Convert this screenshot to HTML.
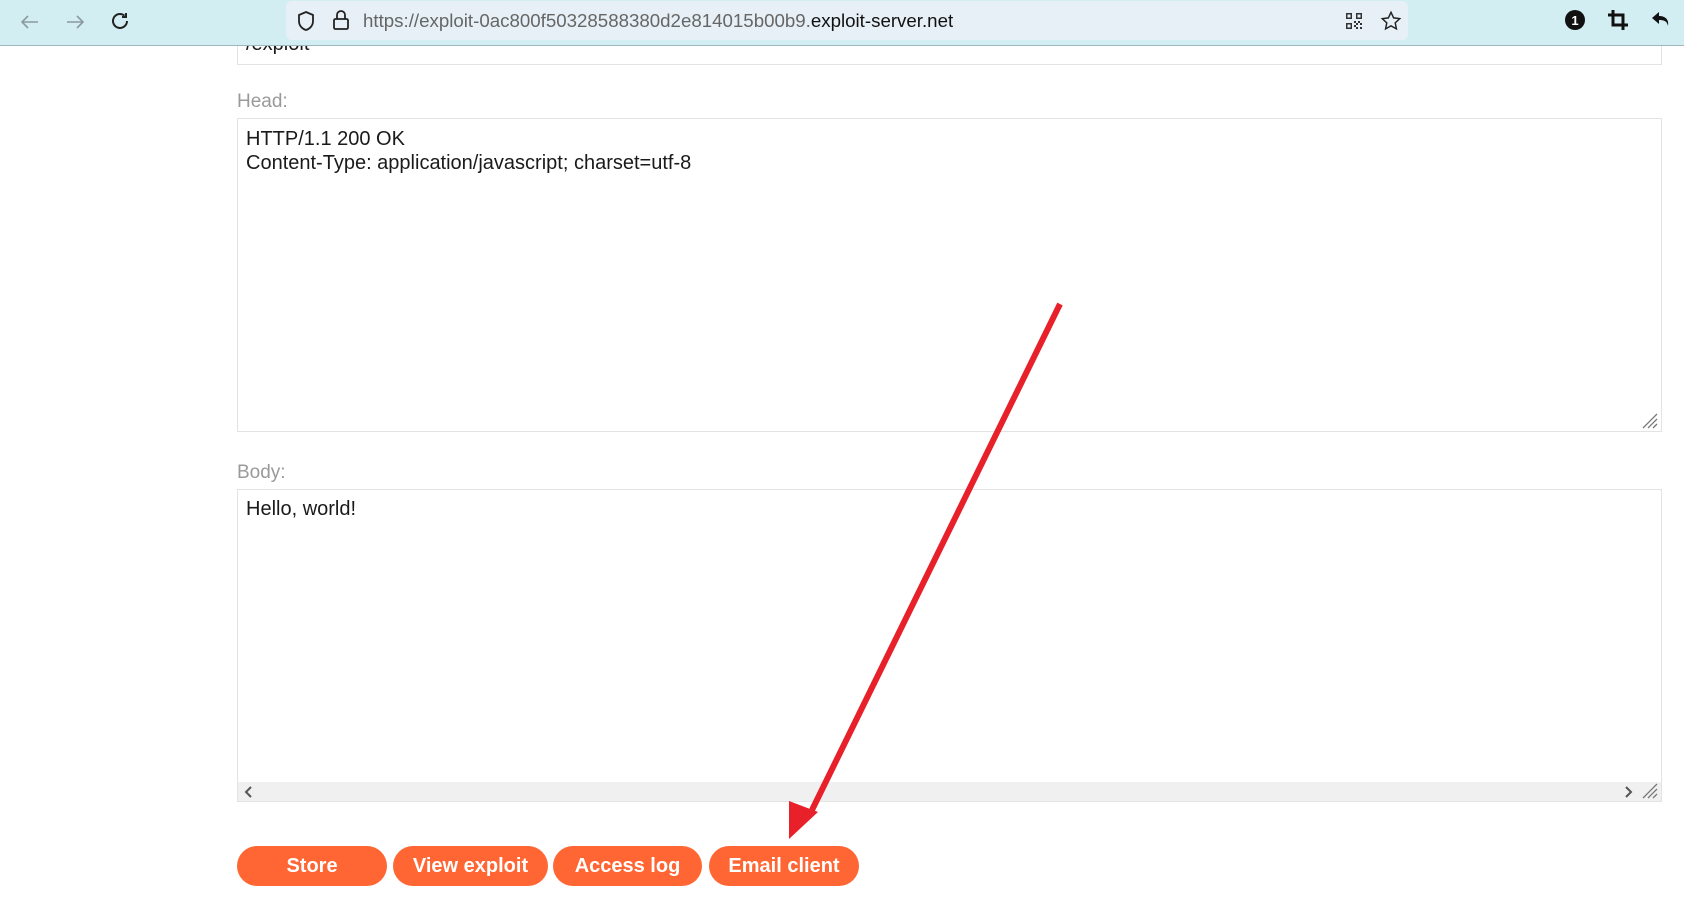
<!DOCTYPE html>
<html><head><meta charset="utf-8"><style>
*{box-sizing:border-box;margin:0;padding:0}
body{width:1684px;height:921px;overflow:hidden;background:#fff;font-family:"Liberation Sans",Arial,sans-serif;position:relative}
.tb{position:absolute;left:0;top:0;width:1684px;height:46px;background:#d3eef2;border-bottom:1px solid #9fb8bd;z-index:2}
.url{position:absolute;left:286px;top:1px;width:1122px;height:39px;background:#e7f0f6;border-radius:6px}
.url .t{position:absolute;left:77px;top:9px;font-size:18.7px;color:#666}
.url .t b{font-weight:normal;color:#111}
.abs{position:absolute}
.box{position:absolute;left:237px;width:1425px;border:1px solid #e3e3e3;background:#fff}
.lbl{position:absolute;left:237px;font-size:19px;color:#9a9a9a}
.txt{position:absolute;left:246px;font-size:20px;color:#1a1a1a;line-height:23.5px}
.btn{position:absolute;top:846px;height:40px;background:#ff6633;color:#fff;font-weight:bold;font-size:20px;border-radius:20px;text-align:center;line-height:40px}
</style></head><body>
<div class="tb">
<svg class="abs" style="left:18px;top:10px" width="24" height="24" viewBox="0 0 24 24" fill="none" stroke="#8a9a9e" stroke-width="1.6"><path d="M20 12H4M10 6l-6 6 6 6"/></svg>
<svg class="abs" style="left:63px;top:10px" width="24" height="24" viewBox="0 0 24 24" fill="none" stroke="#8a9a9e" stroke-width="1.6"><path d="M4 12h16M14 6l6 6-6 6"/></svg>
<svg class="abs" style="left:108px;top:9px" width="24" height="24" viewBox="0 0 24 24" fill="none" stroke="#222" stroke-width="2"><path d="M19 12a7 7 0 1 1-2.5-5.4"/><path d="M18 4v4h-4" /></svg>
<div class="url">
<svg class="abs" style="left:10px;top:9px" width="20" height="22" viewBox="0 0 20 22" fill="none" stroke="#222" stroke-width="1.8"><path d="M10 2l7 3v6c0 5-3.5 8-7 9-3.5-1-7-4-7-9V5z"/></svg>
<svg class="abs" style="left:46px;top:8px" width="18" height="22" viewBox="0 0 18 22" fill="none" stroke="#222" stroke-width="1.8"><rect x="2" y="10" width="14" height="10" rx="1.5"/><path d="M5 10V6a4 4 0 0 1 8 0v4"/></svg>
<div class="t">https://exploit-0ac800f50328588380d2e814015b00b9.<b>exploit-server.net</b></div>
<svg class="abs" style="left:1059px;top:11px" width="18" height="18" viewBox="0 0 18 18" fill="#333"><path d="M1 1h6v6H1zM2.5 2.5v3h3v-3zM11 1h6v6h-6zm1.5 1.5v3h3v-3zM1 11h6v6H1zm1.5 1.5v3h3v-3zM9 9h2v2H9zm2 2h2v2h-2zm2-2h2v2h-2zm2 2h2v2h-2zm-4 4h2v2h-2zm4 0h2v2h-2zM9 13h2v2H9z"/></svg>
<svg class="abs" style="left:1094px;top:9px" width="22" height="22" viewBox="0 0 24 24" fill="none" stroke="#222" stroke-width="1.6"><path d="M12 2.5l2.9 6.1 6.6.8-4.9 4.6 1.3 6.6L12 17.3l-5.9 3.3 1.3-6.6-4.9-4.6 6.6-.8z"/></svg>
</div>
<svg class="abs" style="left:1564px;top:9px" width="22" height="22" viewBox="0 0 22 22"><circle cx="11" cy="11" r="10" fill="#111"/><text x="11" y="16" font-size="13" font-weight="bold" fill="#fff" text-anchor="middle" font-family="Liberation Sans">1</text></svg>
<svg class="abs" style="left:1607px;top:9px" width="22" height="22" viewBox="0 0 22 22" fill="none" stroke="#111" stroke-width="3"><path d="M6 1v15h15M1 6h15v15"/></svg>
<svg class="abs" style="left:1651px;top:9px" width="22" height="22" viewBox="0 0 22 22" fill="#111"><path d="M8 3L1 9l7 6v-4c5 0 8 1 9 6 1-6-2-10-9-10z"/></svg>
</div>

<div class="box" style="top:20px;height:45px"></div>
<div class="txt" style="top:33px">/exploit</div>

<div class="lbl" style="top:91px">Head:</div>
<div class="box" style="top:118px;height:314px"></div>
<div class="txt" style="top:128px">HTTP/1.1 200 OK<br>Content-Type: application/javascript; charset=utf-8</div>
<svg class="abs" style="left:1641px;top:412px" width="18" height="18" viewBox="0 0 18 18" stroke="#777" stroke-width="1.3"><path d="M2 16L16 2M7 16l9-9M12 16l4-4"/></svg>

<div class="lbl" style="top:462px">Body:</div>
<div class="box" style="top:489px;height:313px"></div>
<div class="txt" style="top:498px">Hello, world!</div>
<div class="abs" style="left:238px;top:782px;width:1423px;height:19px;background:#f0f0f0"></div>
<svg class="abs" style="left:243px;top:785px" width="12" height="14" viewBox="0 0 12 14" fill="none" stroke="#555" stroke-width="2"><path d="M8 2L3 7l5 5"/></svg>
<svg class="abs" style="left:1622px;top:785px" width="12" height="14" viewBox="0 0 12 14" fill="none" stroke="#555" stroke-width="2"><path d="M4 2l5 5-5 5"/></svg>
<svg class="abs" style="left:1641px;top:782px" width="18" height="18" viewBox="0 0 18 18" stroke="#777" stroke-width="1.3"><path d="M2 16L16 2M7 16l9-9M12 16l4-4"/></svg>

<div class="btn" style="left:237px;width:150px">Store</div>
<div class="btn" style="left:393px;width:155px">View exploit</div>
<div class="btn" style="left:553px;width:149px">Access log</div>
<div class="btn" style="left:709px;width:150px">Email client</div>

<svg class="abs" style="left:0;top:0" width="1684" height="921">
<path d="M1060 304 L812 810" stroke="#e8202a" stroke-width="6" fill="none"/>
<path d="M789 839 L789 801 L818 812 Z" fill="#e8202a"/>
</svg>
</body></html>
